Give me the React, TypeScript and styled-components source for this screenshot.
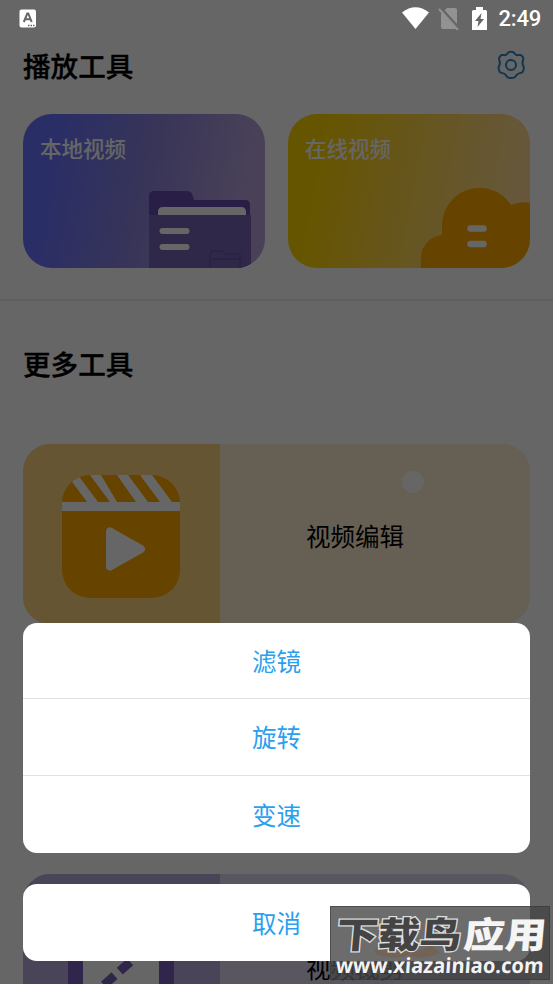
import React from "react";
import styled, { createGlobalStyle } from "styled-components";

const GlobalStyle = createGlobalStyle`
  * { box-sizing: border-box; }
  html, body { margin: 0; background: #fff; }
  body { font-family: "Noto Sans CJK SC", "Noto Sans", sans-serif; color: #000; }
  button { font: inherit; border: 0; padding: 0; background: none; }
  svg { display: block; }
`;

const Screen = styled.div`
  position: relative;
  width: 553px;
  height: 984px;
  overflow: hidden;
  background: #fff;
`;

const Page = styled.main`
  display: flex;
  flex-direction: column;
  padding-top: 38px;
`;

const Header = styled.header`
  display: flex;
  align-items: center;
  justify-content: space-between;
  height: 76px;
  padding: 0 27px 23px 23px;
`;

const Title = styled.h2`
  margin: 0;
  font-size: 27.6px;
  line-height: 40px;
  font-weight: 500;
  -webkit-text-stroke: 0.4px #000;
`;

const Players = styled.section`
  display: grid;
  grid-template-columns: 242px 242px;
  gap: 23px;
  padding: 0 23px 31px;
  border-bottom: 2px solid #ebebeb;
`;

const PlayerCard = styled.div<{ $from: string; $mid: string; $to: string }>`
  display: flex;
  flex-direction: column;
  justify-content: space-between;
  height: 154px;
  overflow: hidden;
  border-radius: 29px;
  background: linear-gradient(101deg, ${(p) => p.$from} 14%, ${(p) => p.$mid} 50%, ${(p) => p.$to} 88%);
`;

const PlayerName = styled.span`
  padding: 18px 17px 0;
  color: #fff;
  font-size: 21.5px;
  line-height: 32px;
  font-weight: 500;
`;

const Art = styled.svg`
  align-self: flex-end;
  flex: none;
`;

const MoreTitle = styled.div`
  padding: 42px 23px 61px;
`;

const Tools = styled.section`
  display: flex;
  flex-direction: column;
  gap: 250px;
  padding: 0 23px;
`;

const ToolCard = styled.div<{ $tint: string }>`
  display: grid;
  grid-template-columns: 197px 1fr;
  height: 180px;
  overflow: hidden;
  border-radius: 27px;
  background: ${(p) => p.$tint};
`;

const ToolIcon = styled.div<{ $tint: string }>`
  display: flex;
  justify-content: center;
  padding: 31px 1px 0 0;
  background: ${(p) => p.$tint};
`;

const ToolBody = styled.div<{ $drop: number }>`
  display: flex;
  flex-direction: column;
  padding: 27px 0 0 86px;
  font-size: 24.5px;
  line-height: 36px;
  gap: ${(p) => p.$drop}px;
`;

const Dot = styled.i`
  width: 22px;
  height: 22px;
  margin-left: 96px;
  border-radius: 50%;
  background: #fff;
`;

const Backdrop = styled.div`
  position: absolute;
  inset: 0;
  display: flex;
  flex-direction: column;
  justify-content: space-between;
  background: rgba(0, 0, 0, 0.6);
`;

const StatusBar = styled.div`
  display: flex;
  align-items: center;
  justify-content: space-between;
  height: 38px;
  padding: 0 12px 2px 19px;
`;

const StatusRight = styled.div`
  display: flex;
  align-items: center;
`;

const Clock = styled.span`
  margin-left: 11px;
  color: #fff;
  font: 500 22px/26px Roboto, sans-serif;
  letter-spacing: -0.2px;
  padding-top: 2px;
`;

const Sheet = styled.div`
  display: flex;
  flex-direction: column;
  gap: 31px;
  padding: 0 23px 23px;
`;

const Group = styled.div`
  display: flex;
  flex-direction: column;
  overflow: hidden;
  border-radius: 14px;
  background: #fff;
`;

const Action = styled.button`
  height: 77px;
  color: #2b9fee;
  font-size: 24.5px;
  line-height: 36px;
  &:not(:last-child) { border-bottom: 1px solid #e2e2e2; }
  &:first-child:not(:last-child) { height: 76px; }
`;

const Stamp = styled.div`
  position: absolute;
  left: 330px;
  top: 906px;
  width: 220px;
  height: 74px;
  border: 1px solid rgba(55, 55, 55, 0.55);
  background: rgba(68, 68, 68, 0.79);
`;

const FolderArt = () => (
  <Art width="116" height="77" viewBox="0 0 116 77">
    <path d="M0 77V5q0-5 5-5h33q5 0 6 6l1 3h51q5 0 5 5v63z" fill="#644bb0" />
    <path d="M9 25v-4q0-5 5-5h78q5 0 5 5v4z" fill="#fff" />
    <path d="M0 24h102v53H0z" fill="#7965b5" />
    <path d="M13.500 40h24M13.500 56h24" stroke="#fff" strokeWidth="6" strokeLinecap="round" />
    <path d="M61 77V64q0-4 4-4h8l4 3h14v14M64 68h29" fill="none" stroke="#6d58ac" strokeWidth="2" />
  </Art>
);

const CloudArt = () => (
  <Art width="109" height="80" viewBox="0 0 109 80">
    <path d="M0 80V69a23 23 0 0 1 21-22V37a37.500 37.500 0 0 1 69-20q9-4 19-2v65z" fill="#ffaa00" />
    <path d="M49.500 40.500h13M49.500 56h13" stroke="#fff" strokeWidth="6.500" strokeLinecap="round" />
  </Art>
);

const ClapperIcon = () => (
  <svg width="118" height="123" viewBox="0 0 118 123">
    <defs>
      <clipPath id="clap"><rect width="118" height="123" rx="28" /></clipPath>
    </defs>
    <g clipPath="url(#clap)">
      <path d="M0 0h118v123H0z" fill="#ffaa00" />
      <path d="M5 0l20 27h11L16 0zM28 0h11l16 27H48zM55 0h11l20 27H74zM78 0h12l20 27H98z" fill="#fff" />
    </g>
    <path d="M0 27h118v9H0z" fill="#fff" />
    <path d="M48 56.500v35L79 74z" fill="#fff" stroke="#fff" strokeWidth="8" strokeLinejoin="round" />
  </svg>
);

const CropIcon = () => (
  <svg width="118" height="123" viewBox="0 0 118 123">
    <path d="M14 0v123M104 0v123" stroke="#7860be" strokeWidth="16" />
    <path d="M21 20h76v100H21z" fill="#fff" />
    <path d="M42 80 76 50" stroke="#7860be" strokeWidth="9" strokeDasharray="14 7" />
  </svg>
);

const GearIcon = () => (
  <svg width="30" height="30" viewBox="0 0 30 30" fill="none" stroke="#2d87c8" strokeWidth="2" strokeLinejoin="round">
    <path d="M12.700 2.200q2.300-1 4.600 0l2.500 2.400q1 .7 2.200.5l2.700-.2q2 1.300 2.700 3.500l-.8 3.800q-.2 1.300.2 2.800l1.100 2.400q0 2.700-1.600 5l-3.200 1q-1.400.4-2.300 1.400l-1.900 2.300q-3.700 2-7.400 0l-1.900-2.300q-.9-1-2.300-1.400l-3.200-1q-1.600-2.300-1.600-5l1.100-2.400q.4-1.500.2-2.800L3 8.400q.7-2.200 2.700-3.500l2.500.2q1.200.2 2.200-.5z" />
    <circle cx="15" cy="15" r="5" />
  </svg>
);

const Watermark = () => (
  <Stamp>
    <svg width="218" height="72" viewBox="0 0 218 72">
      <path d="M44 42q14-13 27-2t28-3l10 9q-18 8-31 2-13 6-34-1z" fill="#76604f" opacity=".7" />
      <g fontFamily="Noto Sans CJK SC, sans-serif" fontWeight="900" fontSize="36" transform="translate(3 0) skewX(-5)">
        <text x="5" y="41" textLength="125" lengthAdjust="spacingAndGlyphs" fill="#444" stroke="#dedede" strokeWidth="2.500" paintOrder="stroke">下载鸟</text>
        <text x="132" y="41" textLength="83" lengthAdjust="spacingAndGlyphs" fill="#f5f5f5">应用</text>
      </g>
      <text x="9" y="66" textLength="208" lengthAdjust="spacingAndGlyphs" fill="#f3f3f3" fontFamily="Open Sans, sans-serif" fontWeight="700" fontSize="21" transform="skewX(-4)">www.xiazainiao.com</text>
    </svg>
  </Stamp>
);

export default function App() {
  return (
    <Screen>
      <GlobalStyle />
      <Page>
        <Header>
          <Title>播放工具</Title>
          <GearIcon />
        </Header>
        <Players>
          <PlayerCard $from="#6973ff" $mid="#8d84dc" $to="#b8a4dc">
            <PlayerName>本地视频</PlayerName>
            <FolderArt />
          </PlayerCard>
          <PlayerCard $from="#ffd400" $mid="#ffd64b" $to="#ffda91">
            <PlayerName>在线视频</PlayerName>
            <CloudArt />
          </PlayerCard>
        </Players>
        <MoreTitle><Title>更多工具</Title></MoreTitle>
        <Tools>
          <ToolCard $tint="#ffeecf">
            <ToolIcon $tint="#ffd480"><ClapperIcon /></ToolIcon>
            <ToolBody $drop={25}><Dot />视频编辑</ToolBody>
          </ToolCard>
          <ToolCard $tint="#e0d8f0">
            <ToolIcon $tint="#b9aade"><CropIcon /></ToolIcon>
            <ToolBody $drop={27}><Dot />视频裁剪</ToolBody>
          </ToolCard>
        </Tools>
      </Page>
      <Backdrop>
        <StatusBar>
          <svg width="18" height="19" viewBox="0 0 18 19">
            <rect x=".5" y=".5" width="16.500" height="18" rx="2" fill="#fff" />
            <path d="m4.800 13 3.500-8.500h1L12.700 13M6 10.200h5.500" fill="none" stroke="#666" strokeWidth="2" />
            <path d="M9 16.500h1.500m1 0H13m1 0h1.500" stroke="#666" strokeWidth="1.300" />
          </svg>
          <StatusRight>
            <svg width="27" height="22" viewBox="0 0 27 22"><path d="M0 5.500Q13.500-5 27 5.500L13.500 22z" fill="#fff" /></svg>
            <svg width="43" height="24" viewBox="0 0 43 24">
              <path d="M18 2h8q2 0 2 2v17q0 2-2 2H14q-2 0-2-2V8z" fill="#929292" />
              <path d="m11 2 19 21" stroke="#666" strokeWidth="4" />
              <path d="m10 3 19 21" stroke="#929292" strokeWidth="2" />
            </svg>
            <svg width="15" height="23" viewBox="0 0 15 23">
              <path d="M4 0h7v3h2.500q1.500 0 1.500 1.500V23H0V4.500Q0 3 1.500 3H4z" fill="#fff" />
              <path d="M9.500 6 3 14h3.500L5.500 20 12 12H8.500z" fill="#666" />
            </svg>
            <Clock>2:49</Clock>
          </StatusRight>
        </StatusBar>
        <Sheet>
          <Group>
            <Action>滤镜</Action>
            <Action>旋转</Action>
            <Action>变速</Action>
          </Group>
          <Group><Action>取消</Action></Group>
        </Sheet>
      </Backdrop>
      <Watermark />
    </Screen>
  );
}
